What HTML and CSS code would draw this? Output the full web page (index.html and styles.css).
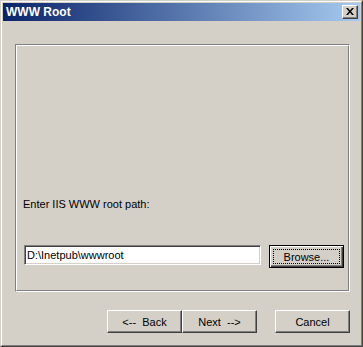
FILE: index.html
```html
<!DOCTYPE html>
<html>
<head>
<meta charset="utf-8">
<link rel="stylesheet" href="styles.css">
</head>
<body>
<div class="window">
  <div class="frame">
    <div class="titlebar">
      <span class="title">WWW Root</span>
      <button class="close" aria-label="Close">
        <svg width="8" height="7" viewBox="0 0 8 7"><path d="M0 0h2l2 2.5 2-2.5h2l-3 3.5 3 3.5h-2l-2-2.5-2 2.5h-2l3-3.5z" fill="#000"/></svg>
      </button>
    </div>
    <div class="content">
      <div class="group">
        <div class="group-inner">
          <div class="label">Enter IIS WWW root path:</div>
          <div class="path-row">
            <input class="field" type="text" value="D:\Inetpub\wwwroot">
            <button class="btn default">Browse...</button>
          </div>
        </div>
      </div>
      <div class="actions">
        <button class="btn">&lt;--  Back</button>
        <button class="btn">Next  --&gt;</button>
        <button class="btn cancel">Cancel</button>
      </div>
    </div>
  </div>
</div>
</body>
</html>
```
FILE: styles.css
```css
html, body {
  margin: 0;
  padding: 0;
  background: #d4d0c8;
}
body {
  font-family: "Liberation Sans", Arial, sans-serif;
  font-size: 11px;
  color: #000;
}
.window {
  width: 363px;
  height: 347px;
  box-sizing: border-box;
  border: 1px solid;
  border-color: #d4d0c8 #404040 #404040 #d4d0c8;
  background: #d4d0c8;
}
.frame {
  height: 100%;
  box-sizing: border-box;
  border: 1px solid;
  border-color: #ffffff #808080 #808080 #ffffff;
  padding: 1px;
  display: flex;
  flex-direction: column;
}
.titlebar {
  height: 18px;
  flex: none;
  display: flex;
  align-items: center;
  justify-content: space-between;
  padding: 0 2px 0 3px;
  background: linear-gradient(to right, #0a246a, #a6caf0);
}
.title {
  color: #fff;
  font-weight: bold;
  font-size: 12px;
  line-height: 14px;
}
.close {
  width: 16px;
  height: 14px;
  box-sizing: border-box;
  padding: 0;
  margin: 0;
  border: 1px solid;
  border-color: #ffffff #404040 #404040 #ffffff;
  box-shadow: inset -1px -1px 0 #808080;
  background: #d4d0c8;
  display: flex;
  align-items: center;
  justify-content: center;
  padding-bottom: 1px;
}
.close svg { display: block; }
.content {
  flex: 1;
  display: flex;
  flex-direction: column;
  padding: 23px 10px 0 12px;
}
.group {
  height: 248px;
  box-sizing: border-box;
  border: 1px solid;
  border-color: #808080 #ffffff #ffffff #808080;
}
.group-inner {
  height: 100%;
  box-sizing: border-box;
  border: 1px solid;
  border-color: #ffffff #808080 #808080 #ffffff;
  padding: 152px 0 0 6px;
}
.label {
  line-height: 13px;
}
.path-row {
  display: flex;
  align-items: flex-start;
  gap: 8px;
  margin-top: 34px;
  padding-left: 1px;
}
.field {
  width: 237px;
  height: 20px;
  box-sizing: border-box;
  margin: 0;
  padding: 0 0 0 2px;
  border: 1px solid;
  border-color: #808080 #ffffff #ffffff #808080;
  box-shadow: inset 1px 1px 0 #404040, inset -1px -1px 0 #d4d0c8;
  background: #fff;
  font-family: "Liberation Sans", Arial, sans-serif;
  font-size: 11px;
  color: #000;
  outline: none;
}
.btn {
  width: 75px;
  height: 23px;
  box-sizing: border-box;
  margin: 0;
  padding: 0;
  border: 1px solid;
  border-color: #ffffff #404040 #404040 #ffffff;
  box-shadow: inset -1px -1px 0 #808080;
  background: #d4d0c8;
  font-family: "Liberation Sans", Arial, sans-serif;
  font-size: 11px;
  color: #000;
  white-space: pre;
  text-align: center;
}
.btn.default {
  border: 1px solid #000;
  box-shadow: inset 1px 1px 0 #ffffff, inset -1px -1px 0 #404040, inset -2px -2px 0 #808080;
  outline: 1px dotted #000;
  outline-offset: -5px;
}
.actions {
  display: flex;
  justify-content: flex-end;
  margin-top: 18px;
}
.actions .cancel {
  margin-left: 18px;
}
```
